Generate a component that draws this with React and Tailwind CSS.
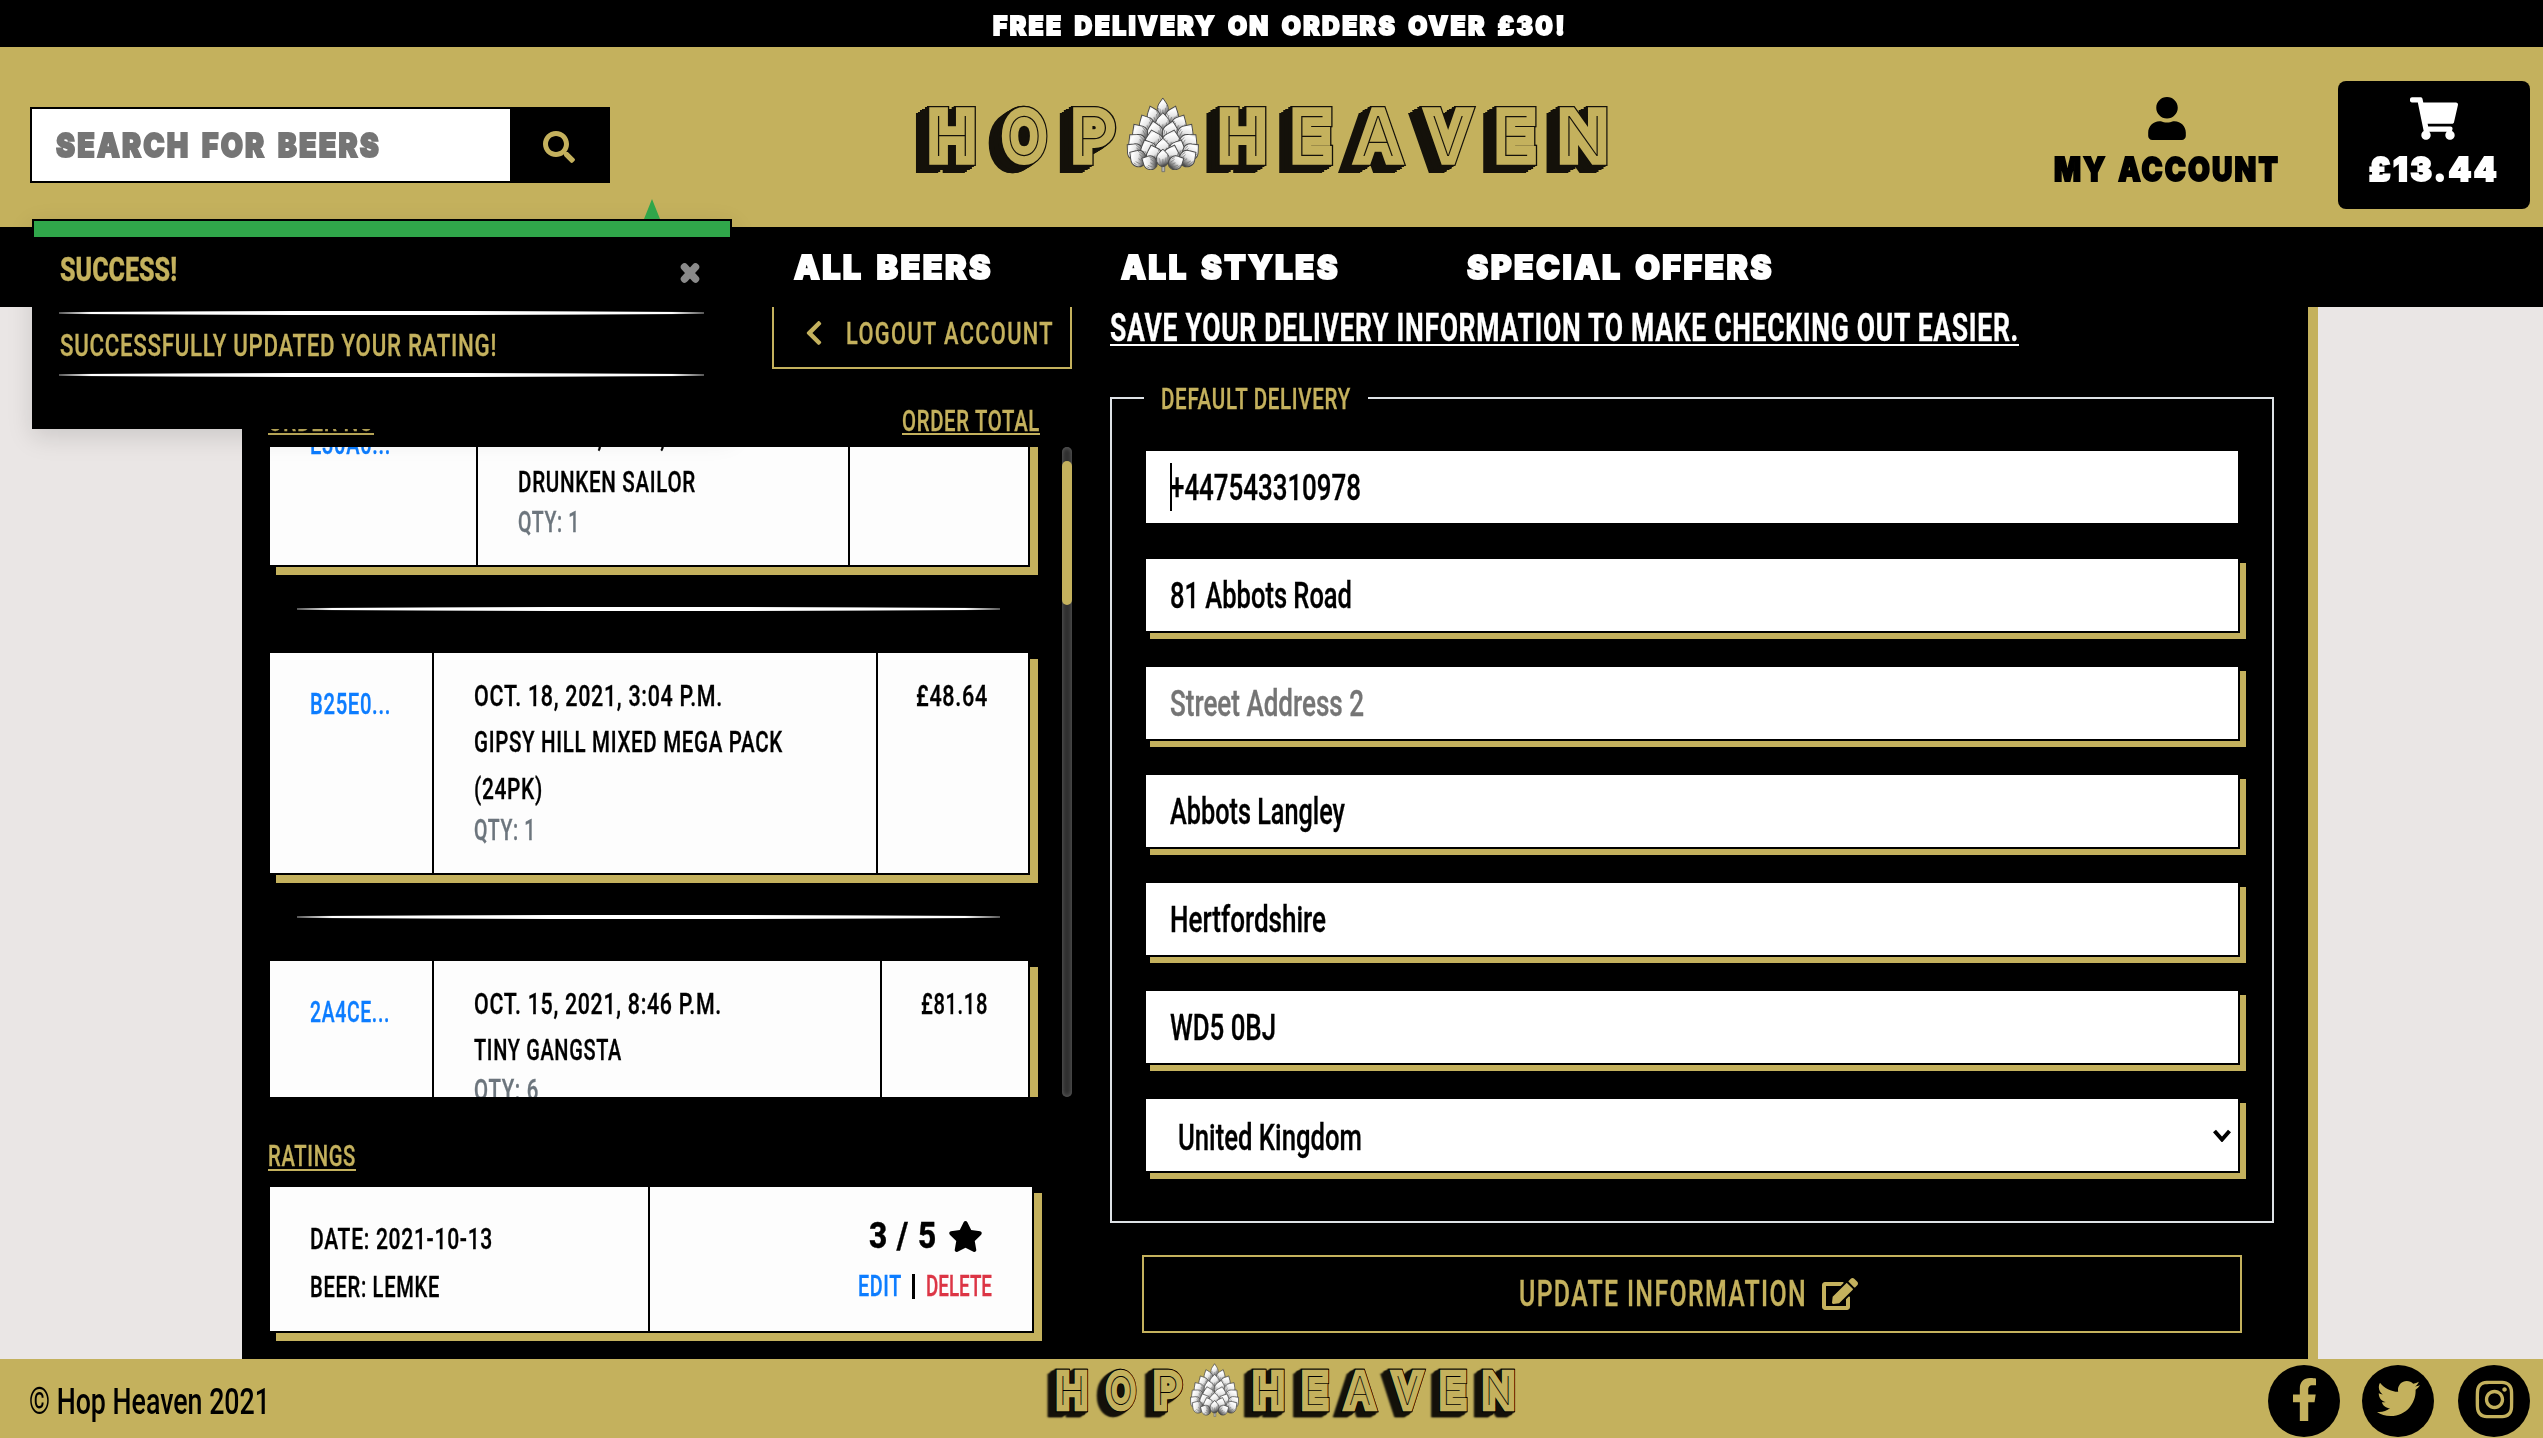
import { useLayoutEffect, useRef } from "react";
import {
  FaSearch,
  FaUser,
  FaShoppingCart,
  FaChevronLeft,
  FaStar,
  FaFacebookF,
  FaTwitter,
  FaInstagram,
  FaEdit,
} from "react-icons/fa";

/* Text squeezed or stretched horizontally to fill its box. */
function Fit({ children, className = "" }) {
  const outer = useRef(null);
  const inner = useRef(null);
  useLayoutEffect(() => {
    const el = inner.current;
    el.style.transform = "none";
    const natural = el.getBoundingClientRect().width;
    const target = outer.current.clientWidth;
    el.style.transform = `scaleX(${target / natural})`;
  });
  return (
    <span ref={outer} className={`block shrink-0 ${className}`}>
      <span ref={inner} className="inline-block origin-left whitespace-nowrap align-top">
        {children}
      </span>
    </span>
  );
}

const BODY =
  "font-['Roboto',sans-serif] font-medium text-[30px] tracking-[1px] [-webkit-text-stroke:0.35px_currentColor]";
const FIELD = "font-['Roboto',sans-serif] font-medium text-[37px] leading-[74px]";
const DISPLAY =
  "font-['Inter',sans-serif] font-black tracking-[2.5px] [word-spacing:4px] [-webkit-text-stroke:1.8px_currentColor]";

const HOP_ROWS = [
  { y: 20, n: 1, half: 0, h: 20, w: 12 },
  { y: 27, n: 2, half: 8, h: 20, w: 14 },
  { y: 35, n: 3, half: 16, h: 20, w: 16 },
  { y: 44, n: 4, half: 23, h: 21, w: 17 },
  { y: 53, n: 4, half: 26, h: 21, w: 20 },
  { y: 60, n: 5, half: 29, h: 19, w: 17 },
  { y: 66, n: 4, half: 24, h: 19, w: 17 },
  { y: 69, n: 3, half: 9, h: 17, w: 14 },
];

function Hop({ className = "" }) {
  return (
    <svg viewBox="-3 -1 81 77" preserveAspectRatio="none" className={className}>
      <defs>
        <linearGradient id="scale" x1="0" y1="0" x2="0.3" y2="1">
          <stop offset="0" stopColor="#b0b0b0" />
          <stop offset="0.3" stopColor="#ffffff" />
          <stop offset="0.6" stopColor="#e6e6e6" />
          <stop offset="1" stopColor="#4f4f4f" />
        </linearGradient>
      </defs>
      <path d="M36.5 64 L36.5 75 L39.5 75 L39.5 64 Z" fill="#b5b5b5" stroke="#666" strokeWidth="0.8" />
      {HOP_ROWS.map((r, i) =>
        Array.from({ length: r.n }, (_, k) => {
          const t = r.n === 1 ? 0 : (k / (r.n - 1)) * 2 - 1;
          const x = 37.5 + t * r.half * 0.82;
          const a = t * (14 + i * 7);
          const w = r.w / 2;
          const h = r.h;
          return (
            <g key={`${i}-${k}`} transform={`translate(${x} ${r.y}) rotate(${a})`}>
              <path
                d={`M0 1 C${-w} 0 ${-w * 1.3} ${-h * 0.5} ${-w * 0.6} ${-h * 0.75} L0 ${-h} L${w * 0.6} ${-h * 0.75} C${w * 1.3} ${-h * 0.5} ${w} 0 0 1 Z`}
                fill="url(#scale)"
                stroke="#4a4a4a"
                strokeWidth="1"
              />
              <path
                d={`M${-w * 0.4} ${-h * 0.15} L${-w * 0.5} ${-h * 0.45} M0 ${-h * 0.1} L0 ${-h * 0.4} M${w * 0.4} ${-h * 0.15} L${w * 0.5} ${-h * 0.5} M${w * 0.75} ${-h * 0.3} L${w * 0.7} ${-h * 0.65} M${-w * 0.75} ${-h * 0.3} L${-w * 0.75} ${-h * 0.5}`}
                stroke="#777"
                strokeWidth="0.7"
                fill="none"
              />
            </g>
          );
        })
      )}
    </svg>
  );
}

/* Centre x and horizontal scale of each letter of the wordmark. */
const LETTERS = [
  ["H", 37, 1],
  ["O", 109, 0.88],
  ["P", 178, 1.03],
  ["H", 327.5, 1],
  ["E", 396, 1],
  ["A", 463, 0.93],
  ["V", 533, 0.93],
  ["E", 600, 1],
  ["N", 668, 0.98],
];

/* Shaded inline wordmark: one set of letters, repeated as face and centre line. */
function Logo({ id, className = "", ink = "#14110a" }) {
  return (
    <div className={`relative ${className}`}>
      <svg viewBox="0 0 694 78" preserveAspectRatio="none" className="block size-full overflow-visible">
        <g
          fill={ink}
          stroke={ink}
          strokeWidth="20"
          className="[filter:drop-shadow(-1px_0.87px_0_#14110a)_drop-shadow(-2px_1.74px_0_#14110a)_drop-shadow(-4px_3.48px_0_#14110a)_drop-shadow(-4.5px_3.91px_0_#14110a)]"
        >
          <g
            id={id}
            strokeLinejoin="miter"
            strokeMiterlimit="1.8"
            fontFamily="Inter, sans-serif"
            fontWeight="100"
            fontSize="55"
            textAnchor="middle"
          >
            {LETTERS.map(([c, x, s], i) => (
              <text key={i} transform={`translate(${x} 58.5) scale(${s} 1)`}>
                {c}
              </text>
            ))}
          </g>
        </g>
        <use href={`#${id}`} fill="#c4b15d" stroke="#c4b15d" strokeWidth="17.4" />
        <use href={`#${id}`} fill={ink} stroke="none" />
      </svg>
      <Hop className="absolute left-[30.2%] top-0 h-[97%] w-[10.9%]" />
    </div>
  );
}

function Rule({ className = "" }) {
  return (
    <div className={`relative h-[4px] shrink-0 ${className}`}>
      <div className="absolute inset-0 bg-[linear-gradient(90deg,transparent_3%,#999_20%,#fff_36%,#fff_64%,#999_80%,transparent_97%)]" />
      <div className="absolute inset-x-0 top-px h-[2px] bg-[linear-gradient(90deg,#555,#fff_5%,#fff_95%,#555)]" />
    </div>
  );
}

function Order({ id, idW, date, dateW, name, nameW, name2, name2W, qty, qtyW, total, totalW, c1, c2 }) {
  return (
    <div className="flex w-[762px] shrink-0 border-2 border-black bg-[#fdfdfd] text-black shadow-[8px_8px_0_#c4b15d]">
      <div className={`shrink-0 border-r-2 border-black pl-[40px] pt-[35px] ${c1}`}>
        <Fit className={`leading-[32px] text-[#0d7dff] ${idW}`}>{id}</Fit>
      </div>
      <div className={`shrink-0 border-r-2 border-black pb-[26px] pl-[40px] pt-[20px] ${c2}`}>
        <Fit className={`leading-[46px] ${dateW}`}>{date}</Fit>
        <Fit className={`leading-[46px] ${nameW}`}>{name}</Fit>
        {name2 && <Fit className={`leading-[48px] ${name2W}`}>{name2}</Fit>}
        <Fit className={`leading-[34px] text-[#6c757d] ${qtyW}`}>{qty}</Fit>
      </div>
      <div className="flex flex-1 justify-end pr-[40px] pt-[20px]">
        <Fit className={`leading-[46px] ${totalW}`}>{total}</Fit>
      </div>
    </div>
  );
}

function Orders() {
  return (
    <div className="flex h-[650px] w-[804px] justify-between overflow-hidden">
      <div className="-mt-[56px] flex w-[780px] flex-col">
        <Order
          id="E30A0..." idW="w-[81px]" c1="w-[208px]" c2="w-[372px]"
          date="OCT. 18, 2021, 3:06 P.M." dateW="w-[248px]"
          name="DRUNKEN SAILOR" nameW="w-[178px]"
          qty="QTY: 1" qtyW="w-[62px]" total="£12.40" totalW="w-[72px]"
        />
        <Rule className="my-[40px] ml-[29px] w-[703px]" />
        <Order
          id="B25E0..." idW="w-[81px]" c1="w-[164px]" c2="w-[444px]"
          date="OCT. 18, 2021, 3:04 P.M." dateW="w-[249px]"
          name="GIPSY HILL MIXED MEGA PACK" nameW="w-[309px]"
          name2="(24PK)" name2W="w-[69px]"
          qty="QTY: 1" qtyW="w-[62px]" total="£48.64" totalW="w-[72px]"
        />
        <Rule className="my-[40px] ml-[29px] w-[703px]" />
        <Order
          id="2A4CE..." idW="w-[80px]" c1="w-[164px]" c2="w-[448px]"
          date="OCT. 15, 2021, 8:46 P.M." dateW="w-[248px]"
          name="TINY GANGSTA" nameW="w-[148px]"
          qty="QTY: 6" qtyW="w-[65px]" total="£81.18" totalW="w-[67px]"
        />
      </div>
      <div className="h-[650px] w-[10px] rounded-full bg-[#2e2e2e] pt-[14px] shadow-[inset_0_0_5px_#666]">
        <div className="h-[144px] rounded-full bg-[#c4b15d]" />
      </div>
    </div>
  );
}

function Ratings() {
  return (
    <div className="flex h-[148px] w-[766px] border-2 border-black bg-[#fdfdfd] text-black shadow-[8px_8px_0_#c4b15d]">
      <div className="w-[380px] border-r-2 border-black pl-[40px] pt-[28px]">
        <Fit className="w-[183px] leading-[48px]">DATE: 2021-10-13</Fit>
        <Fit className="w-[130px] leading-[48px]">BEER: LEMKE</Fit>
      </div>
      <div className="flex flex-1 flex-col items-end pt-[25px]">
        <div className="mr-[49px] flex h-[48px] items-center gap-[11px]">
          <Fit className="w-[68px] text-[37px] font-extrabold leading-[48px]">3 / 5</Fit>
          <FaStar className="size-[35px]" />
        </div>
        <div className="mr-[40px] mt-[2px] flex h-[48px] leading-[48px]">
          <Fit className="w-[44px] text-[#0d7dff]">EDIT</Fit>
          <div className="mx-[10px] mt-[12px] h-[25px] w-[3px] bg-black" />
          <Fit className="ml-px w-[66px] tracking-normal text-[#dc3545]">DELETE</Fit>
        </div>
      </div>
    </div>
  );
}

const FIELDS = [
  ["+447543310978", "w-[191px]"],
  ["81 Abbots Road", "w-[182px]"],
  ["Street Address 2", "w-[194px] text-[#757575]"],
  ["Abbots Langley", "w-[175px]"],
  ["Hertfordshire", "w-[156px]"],
  ["WD5 0BJ", "w-[106px]"],
];

function DeliveryForm() {
  return (
    <div className="w-[1164px]">
      <Fit className="mt-[5px] w-[909px] border-b-2 border-white text-[38px] font-bold leading-[32px] tracking-[1px] text-white">
        SAVE YOUR DELIVERY INFORMATION TO MAKE CHECKING OUT EASIER.
      </Fit>
      <fieldset className="mt-[39px] min-w-0 border-2 border-[#dee2e6] px-[32px] pb-[48px]">
        <legend className="h-[26px] px-[17px] text-[#c4b15d]">
          <Fit className="w-[190px] leading-[27px]">DEFAULT DELIVERY</Fit>
        </legend>
        <div className="flex flex-col gap-[32px] pt-[38px]">
          {FIELDS.map(([text, w], i) => (
            <div
              key={text}
              className={`relative h-[76px] border-2 border-black bg-white pl-[24px] text-black ${i > 0 ? "shadow-[6px_6px_0_#c4b15d]" : ""}`}
            >
              <Fit className={`h-[72px] tracking-normal ${FIELD} ${w}`}>{text}</Fit>
              {i === 0 && <span className="absolute left-[24px] top-[12px] h-[48px] w-[2px] bg-black" />}
            </div>
          ))}
          <div className="flex h-[76px] items-center justify-between border-2 border-black bg-white pl-[32px] pr-[7px] text-black shadow-[6px_6px_0_#c4b15d]">
            <Fit className={`mt-[6px] w-[184px] tracking-normal ${FIELD}`}>United Kingdom</Fit>
            <svg viewBox="0 0 18 13" className="h-[13px] w-[18px]">
              <path d="M1.5 2 L9 10.5 L16.5 2" fill="none" stroke="#000" strokeWidth="4" />
            </svg>
          </div>
        </div>
      </fieldset>
      <div className="ml-[32px] mt-[32px] flex h-[78px] w-[1100px] items-center justify-center gap-[15px] border-2 border-[#c4b15d] pr-[7px] text-[#c4b15d]">
        <Fit className="w-[288px] text-[37px] leading-[74px] tracking-[2px]">UPDATE INFORMATION</Fit>
        <FaEdit className="h-[32px] w-[36px]" />
      </div>
    </div>
  );
}

function Toast() {
  return (
    <div
      className={`absolute left-[32px] top-[219px] z-20 h-[210px] w-[700px] bg-black text-[#c4b15d] shadow-[0_8px_24px_rgba(0,0,0,0.13)] ${BODY}`}
    >
      <svg viewBox="0 0 16 20" className="absolute left-[612px] top-[-20px] h-[20px] w-[16px]">
        <path d="M8 0 L16 20 L0 20 Z" fill="#30a64a" />
      </svg>
      <div className="px-[2px] pt-[2px]">
        <div className="h-[16px] bg-[#30a64a]" />
      </div>
      <div className="flex h-[50px] items-start justify-between pl-[28px] pr-[32px] pt-[16px]">
        <Fit className="w-[117px] text-[33px] font-extrabold leading-[34px] tracking-normal">SUCCESS!</Fit>
        <svg viewBox="0 0 20 22" className="mt-[9px] h-[22px] w-[20px]">
          <path d="M4.5 5 L15.5 17 M15.5 5 L4.5 17" stroke="#8a8a8a" strokeWidth="7.5" strokeLinecap="round" />
        </svg>
      </div>
      <Rule className="ml-[27px] mt-[24px] w-[645px]" />
      <Fit className="ml-[28px] mt-[13px] w-[437px] text-[32px] leading-[34px]">SUCCESSFULLY UPDATED YOUR RATING!</Fit>
      <Rule className="ml-[27px] mt-[11px] w-[645px]" />
    </div>
  );
}

function Header() {
  return (
    <>
      <div className="flex h-[47px] justify-center bg-black pl-[16px] text-white">
        <Fit className={`w-[574px] text-[26px] leading-[51px] ${DISPLAY}`}>FREE DELIVERY ON ORDERS OVER £30!</Fit>
      </div>
      <div className="flex h-[180px] bg-[#c4b15d]">
        <div className="ml-[30px] mt-[60px] flex h-[76px] w-[580px] bg-black">
          <div className="m-[2px] mr-0 h-[72px] w-[478px] bg-white pl-[24px]">
            <Fit className={`w-[325px] text-[33px] leading-[73px] text-[#757575] ${DISPLAY}`}>SEARCH FOR BEERS</Fit>
          </div>
          <div className="flex flex-1 items-center justify-center pr-[2px] pt-[3px] text-[#c4b15d]">
            <FaSearch className="size-[32px]" />
          </div>
        </div>
        <Logo id="wordmark-header" className="ml-[305px] mt-[50px] h-[78px] w-[694px]" />
        <div className="ml-[445px] flex w-[226px] flex-col items-center pt-[50px] text-black">
          <FaUser className="h-[43px] w-[38px]" />
          <Fit className={`mt-[9px] w-[226px] text-[33px] leading-[40px] ${DISPLAY}`}>MY ACCOUNT</Fit>
        </div>
        <div className="ml-[58px] mt-[34px] flex h-[128px] w-[192px] flex-col items-center rounded-[8px] bg-black pt-[16px] text-white">
          <FaShoppingCart className="h-[43px] w-[48px]" />
          <Fit className={`mt-[9px] w-[130px] text-[33px] leading-[40px] ${DISPLAY}`}>£13.44</Fit>
        </div>
      </div>
      <div className={`flex h-[80px] shrink-0 bg-black text-[33px] leading-[80px] text-white ${DISPLAY}`}>
        <Fit className="ml-[794px] w-[199px]">ALL BEERS</Fit>
        <Fit className="ml-[128px] w-[219px]">ALL STYLES</Fit>
        <Fit className="ml-[127px] w-[307px]">SPECIAL OFFERS</Fit>
      </div>
    </>
  );
}

function Footer() {
  return (
    <div className="flex h-[79px] items-start bg-[#c4b15d] text-black">
      <Fit className="ml-[29px] mt-[6px] w-[241px] font-['Roboto',sans-serif] text-[37px] font-medium leading-[73px]">
        © Hop Heaven 2021
      </Fit>
      <Logo id="wordmark-footer" className="ml-[777px] mt-[4px] h-[56px] w-[469px]" ink="#000000" />
      <div className="ml-[752px] mt-[6px] flex gap-[22px] text-[#c4b15d]">
        <div className="flex size-[72px] items-center justify-center rounded-full bg-black pb-[4px]">
          <FaFacebookF className="h-[43px] w-[27px]" />
        </div>
        <div className="flex size-[72px] items-center justify-center rounded-full bg-black pb-[6px]">
          <FaTwitter className="size-[43px]" />
        </div>
        <div className="ml-[2px] flex size-[72px] items-center justify-center rounded-full bg-black pb-[4px]">
          <FaInstagram className="size-[43px]" />
        </div>
      </div>
    </div>
  );
}

export default function App() {
  return (
    <div className="relative flex h-[1438px] w-[2543px] flex-col overflow-hidden bg-[#eae6e5]">
      <Header />
      <div className={`ml-[242px] flex h-[1052px] w-[2076px] border-r-[10px] border-[#c4b15d] bg-black pl-[26px] text-[#c4b15d] ${BODY}`}>
        <div className="w-[804px]">
          <div className="ml-[504px] flex h-[62px] w-[300px] items-center border-2 border-t-0 border-[#c4b15d] pb-[8px] pl-[31px]">
            <FaChevronLeft className="h-[28px] w-[18px]" />
            <Fit className="ml-[23px] w-[208px] text-[32px] leading-[50px] tracking-[2px]">LOGOUT ACCOUNT</Fit>
          </div>
          <div className="flex h-[78px] w-[772px] justify-between pt-[39px] leading-[25px]">
            <Fit className="h-[27px] w-[106px] border-b-2 border-[#c4b15d]">ORDER NO</Fit>
            <Fit className="h-[27px] w-[138px] border-b-2 border-[#c4b15d]">ORDER TOTAL</Fit>
          </div>
          <Orders />
          <Fit className="mb-[14px] mt-[47px] h-[27px] w-[88px] border-b-2 border-[#c4b15d] leading-[24px]">RATINGS</Fit>
          <Ratings />
        </div>
        <div className="ml-[38px]">
          <DeliveryForm />
        </div>
      </div>
      <Footer />
      <Toast />
    </div>
  );
}
